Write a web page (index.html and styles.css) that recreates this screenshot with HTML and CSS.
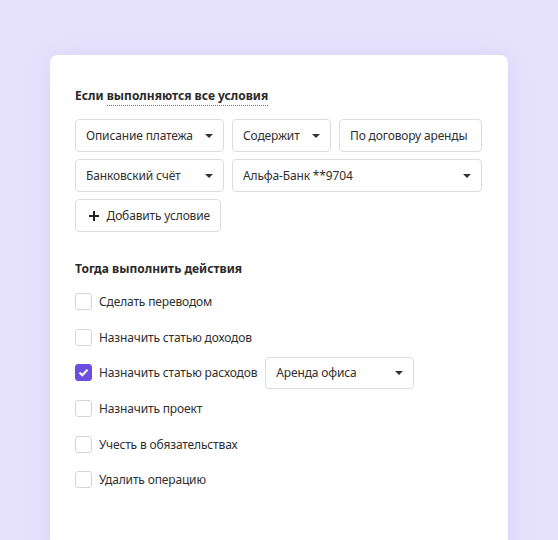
FILE: index.html
```html
<!DOCTYPE html>
<html lang="ru">
<head>
<meta charset="utf-8">
<link rel="stylesheet" href="styles.css">
</head>
<body>
<div class="card">
  <div class="title">Если <span class="dotted">выполняются все условия</span></div>
  <div class="conds">
    <div class="row">
      <div class="field w149">Описание платежа<span class="arrow"></span></div>
      <div class="field w99">Содержит<span class="arrow"></span></div>
      <div class="field w143 plain">По договору аренды</div>
    </div>
    <div class="row">
      <div class="field w149">Банковский счёт<span class="arrow"></span></div>
      <div class="field w250">Альфа-Банк **9704<span class="arrow"></span></div>
    </div>
    <div class="row">
      <div class="field add"><span class="plus"></span>Добавить условие</div>
    </div>
  </div>
  <div class="title t2">Тогда выполнить действия</div>
  <div class="actions">
    <div class="act"><span class="cb"></span>Сделать переводом</div>
    <div class="act"><span class="cb"></span>Назначить статью доходов</div>
    <div class="act"><span class="cb on"><svg width="11" height="9" viewBox="0 0 11 9"><path d="M1.5 4.5l2.8 2.8L9.5 1.8" fill="none" stroke="#fff" stroke-width="2"/></svg></span>Назначить статью расходов<div class="field w149 sel">Аренда офиса<span class="arrow"></span></div></div>
    <div class="act"><span class="cb"></span>Назначить проект</div>
    <div class="act"><span class="cb"></span>Учесть в обязательствах</div>
    <div class="act"><span class="cb"></span>Удалить операцию</div>
  </div>
</div>
</body>
</html>
```
FILE: styles.css
```css
html, body {
  margin: 0;
  padding: 0;
  background: #e6e2fd;
  height: 540px;
  overflow: hidden;
}
body {
  font-family: "Noto Sans", "Open Sans", sans-serif;
  font-size: 12px;
  letter-spacing: -0.15px;
  color: #2f2f2f;
  padding-top: 55px;
  padding-left: 50px;
  box-sizing: border-box;
}
.card {
  width: 458px;
  height: 500px;
  background: #fff;
  border-radius: 8px 8px 0 0;
  box-shadow: 0 4px 24px rgba(110, 90, 220, 0.12);
  padding: 32px 25px 0 25px;
  box-sizing: border-box;
}
.title {
  font-weight: 700;
  font-size: 12px;
  letter-spacing: 0;
  line-height: 18px;
  color: #2a2a2a;
}
.dotted {
  border-bottom: 1px dotted #777;
  padding-bottom: 1px;
}
.conds {
  margin-top: 14px;
  display: flex;
  flex-direction: column;
  gap: 7px;
}
.row {
  display: flex;
  gap: 8px;
}
.field {
  height: 33px;
  box-sizing: border-box;
  border: 1px solid #dcdcdc;
  border-radius: 4px;
  display: flex;
  align-items: center;
  padding: 0 10px;
  justify-content: space-between;
  color: #2f2f2f;
  white-space: nowrap;
}
.plain { justify-content: flex-start; }
.w149 { width: 149px; }
.w99 { width: 99px; }
.w143 { width: 143px; }
.w250 { width: 250px; }
.arrow {
  width: 0;
  height: 0;
  border-left: 4.5px solid transparent;
  border-right: 4.5px solid transparent;
  border-top: 4.5px solid #333;
}
.add {
  justify-content: flex-start;
  width: 146px;
  padding-left: 13px;
}
.plus {
  position: relative;
  width: 10px;
  height: 10px;
  margin-right: 8px;
}
.plus::before, .plus::after {
  content: "";
  position: absolute;
  background: #222;
}
.plus::before { left: 0; top: 4px; width: 10px; height: 2px; }
.plus::after { left: 4px; top: 0; width: 2px; height: 10px; }
.t2 { margin-top: 28px; }
.actions {
  margin-top: 6px;
  display: flex;
  flex-direction: column;
}
.act {
  height: 35.6px;
  display: flex;
  align-items: center;
}
.cb {
  width: 17px;
  height: 17px;
  box-sizing: border-box;
  border: 1px solid #d6d6d6;
  border-radius: 3px;
  margin-right: 7px;
  display: flex;
  align-items: center;
  justify-content: center;
}
.cb.on {
  background: #6c4fe0;
  border-color: #6c4fe0;
}
.sel {
  margin-left: 8px;
  height: 32px;
}
```
